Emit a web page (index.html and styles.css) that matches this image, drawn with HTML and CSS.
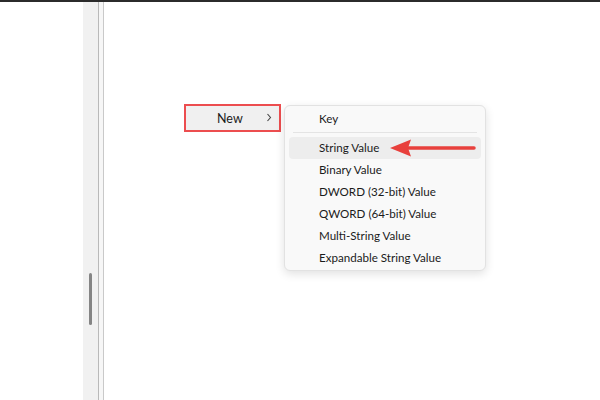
FILE: index.html
```html
<!DOCTYPE html>
<html>
<head>
<meta charset="utf-8">
<link rel="stylesheet" href="styles.css">
</head>
<body>
<div class="topline"></div>
<div class="window">
  <div class="tree"></div>
  <div class="scrollcol"><div class="thumb"></div></div>
  <div class="divider"></div>
  <div class="pane">
    <div class="newitem">
      <span class="newlabel">New</span>
      <svg class="chev" width="6" height="9" viewBox="0 0 6 9"><polyline points="1.5,1 4.5,4.5 1.5,8" fill="none" stroke="#444" stroke-width="1.1"/></svg>
    </div>
    <div class="submenu">
      <div class="item">Key</div>
      <div class="sep"></div>
      <div class="item hl">String Value
        <svg class="arrow" width="88" height="20" viewBox="0 0 88 20"><line x1="14" y1="10" x2="84" y2="10" stroke="#e8403c" stroke-width="3.5" stroke-linecap="round"/><polygon points="0,10 21,1.5 18,10 21,18.5" fill="#e8403c"/></svg>
      </div>
      <div class="item">Binary Value</div>
      <div class="item">DWORD (32-bit) Value</div>
      <div class="item">QWORD (64-bit) Value</div>
      <div class="item">Multi-String Value</div>
      <div class="item">Expandable String Value</div>
    </div>
  </div>
</div>
</body>
</html>
```
FILE: styles.css
```css
html, body { margin: 0; padding: 0; background: #fff; }
body {
  width: 600px; height: 400px; overflow: hidden;
  font-family: "Lato", "Noto Sans", sans-serif;
  color: #1b1b1b;
}
.topline { height: 2px; background: #2b2b2b; }
.window { display: flex; height: 398px; }
.tree { width: 83px; background: #fff; }
.scrollcol {
  width: 15px; background: #f1f1f1;
  display: flex; flex-direction: column; align-items: center;
  padding-top: 271px; box-sizing: border-box;
}
.thumb { width: 3px; height: 52px; background: #858585; border-radius: 2px; }
.divider {
  width: 6px;
  border-left: 1px solid #b9b9b9;
  border-right: 1px solid #c9c9c9;
  background: #f6f6f6;
  box-sizing: border-box;
}
.pane { flex: 1; position: relative; background: #fff; }
.newitem {
  position: absolute; left: 80px; top: 102px;
  width: 97px; height: 28px; box-sizing: border-box;
  border: 2px solid #ec4d4f;
  background: #f0f0f0;
  display: flex; align-items: center;
  font-size: 12.5px;
}
.newlabel { margin-left: 31px; flex: 1; }
.chev { margin-right: 7px; margin-top: -2px; }
.submenu {
  position: absolute; left: 180px; top: 103px;
  width: 202px; box-sizing: border-box;
  background: #f9f9f9;
  border: 1px solid #e2e2e2;
  border-radius: 6px;
  box-shadow: 0 3px 10px rgba(0,0,0,0.12);
  padding: 2px 4px 1px 4px;
  font-size: 11.6px;
}
.item {
  position: relative;
  height: 22px; line-height: 22px;
  padding-left: 30px;
  border-radius: 4px;
}
.item.hl { background: #ededed; }
.sep { height: 1px; background: #e4e4e4; margin: 2px 4px 4px 4px; }
.arrow { position: absolute; left: 101px; top: 1px; }
```
